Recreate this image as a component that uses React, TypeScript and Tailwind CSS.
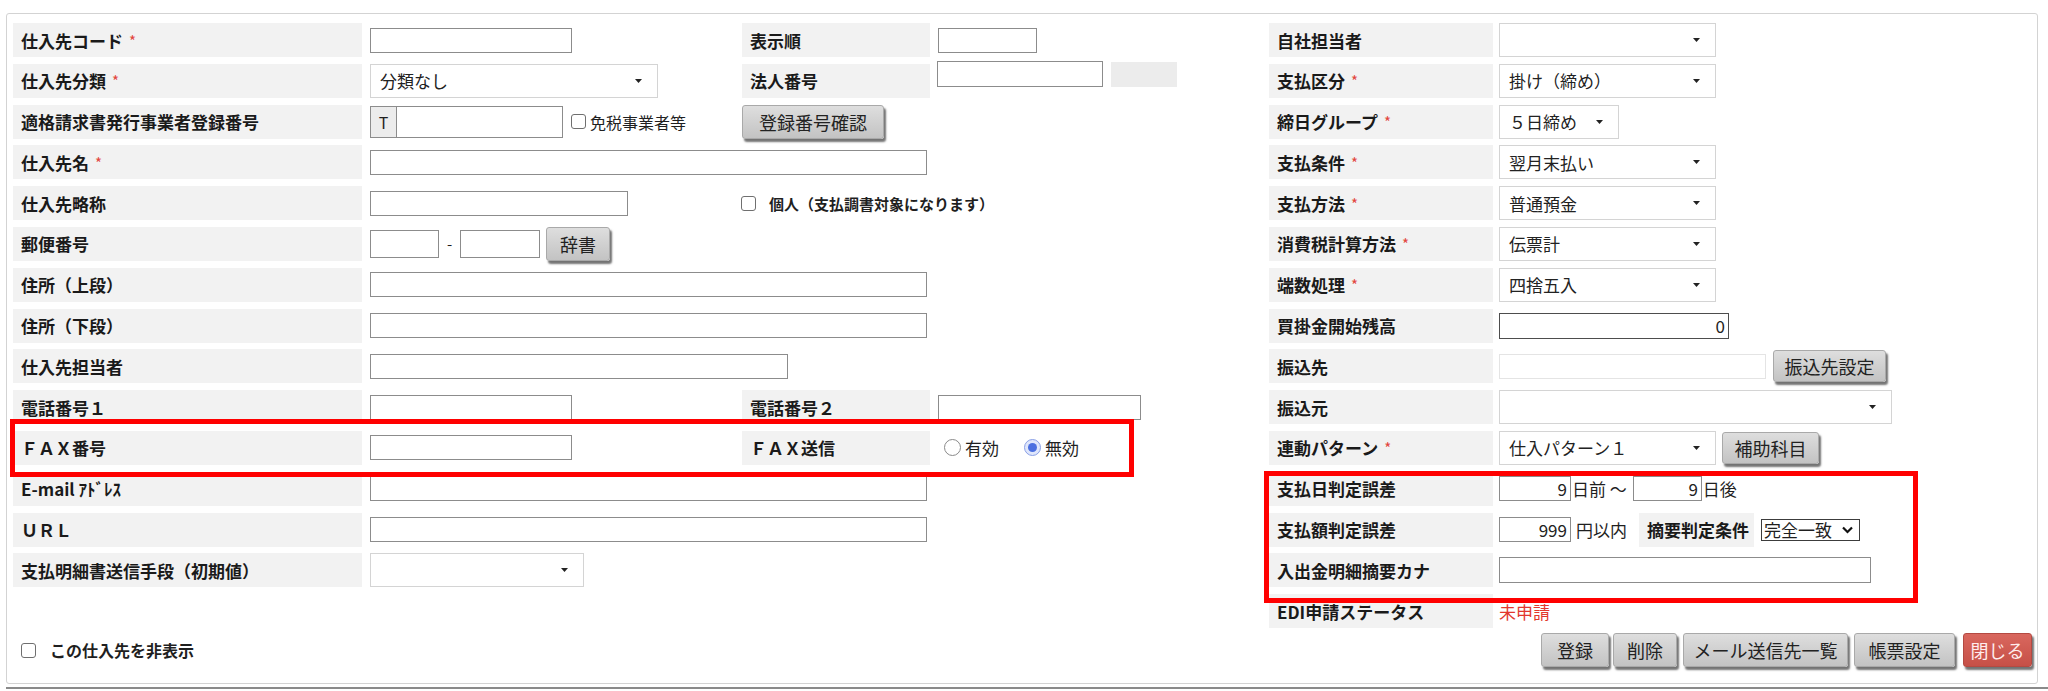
import type { ReactNode } from 'react';

// 仕入先マスタ登録フォーム

function Req() {
  return <span className="ml-[6px] text-[15px] font-normal text-[#e2453c]">*</span>;
}

function Label({ children, req, className = 'w-[349px]' }: { children: ReactNode; req?: boolean; className?: string }) {
  return (
    <div className={`flex h-[34px] shrink-0 items-center bg-[#f2f2f2] pl-[8px] text-[17px] font-bold leading-none text-[#1a1a1a] ${className}`}>
      {children}
      {req && <Req />}
    </div>
  );
}

function TextBox({ className, value, right, tone = 'normal' }: { className: string; value?: string; right?: boolean; tone?: 'normal' | 'dark' | 'light' }) {
  const border = tone === 'dark' ? 'border-[#4d4d4d]' : tone === 'light' ? 'border-[#e4e4e4]' : 'border-[#8c8c8c]';
  return (
    <div className={`flex shrink-0 items-center border bg-white px-[3px] text-[17px] leading-none text-[#222] ${border} ${right ? 'justify-end' : ''} ${className}`}>
      {value}
    </div>
  );
}

function Caret() {
  return (
    <svg width="7" height="4" viewBox="0 0 7 4" className="shrink-0">
      <path d="M0 0h7L3.5 4z" fill="#222" />
    </svg>
  );
}

function Dropdown({ className, value = '' }: { className: string; value?: string }) {
  return (
    <div className={`flex h-[34px] shrink-0 items-center justify-between border border-[#d4d4d4] bg-white pl-[9px] pr-[15px] text-[17px] leading-none text-[#222] ${className}`}>
      <span>{value}</span>
      <Caret />
    </div>
  );
}

function GreyButton({ children, className }: { children: ReactNode; className: string }) {
  return (
    <div className={`flex shrink-0 items-center justify-center rounded-[3px] border border-[#a9a9a9] bg-linear-to-b from-[#dedede] to-[#c3c3c3] text-[18px] leading-none text-[#222] shadow-[2px_3px_2px_rgba(0,0,0,0.55)] ${className}`}>
      {children}
    </div>
  );
}

function Checkbox() {
  return <span className="inline-block h-[15px] w-[15px] shrink-0 rounded-[3px] border border-[#6f6f6f] bg-white" />;
}

function Radio({ checked }: { checked?: boolean }) {
  return checked ? (
    <span className="flex h-[17px] w-[17px] shrink-0 items-center justify-center rounded-full border border-[#8aa0e6] bg-[#dfe6fb]">
      <span className="h-[9px] w-[9px] rounded-full bg-[#4b6fe0]" />
    </span>
  ) : (
    <span className="h-[17px] w-[17px] shrink-0 rounded-full border border-[#8a8a8a] bg-white" />
  );
}

function Row({ children }: { children: ReactNode }) {
  return <div className="flex h-[34px] items-center">{children}</div>;
}

// left side: label column + fields (the middle label column sits inside the same rows)
function Field({ children, className = '' }: { children?: ReactNode; className?: string }) {
  return <div className={`ml-[8px] flex h-full items-center ${className}`}>{children}</div>;
}

function MidLabel({ children }: { children: ReactNode }) {
  return <Label className="w-[188px]">{children}</Label>;
}

function LeftBlock() {
  return (
    <div className="flex w-[1256px] shrink-0 flex-col gap-[6.8px]">
      <Row>
        <Label req>仕入先コード</Label>
        <Field className="w-[372px]"><TextBox className="h-[25px] w-[202px]" /></Field>
        <MidLabel>表示順</MidLabel>
        <Field className="ml-[7px]"><TextBox className="h-[25px] w-[99px]" /></Field>
      </Row>
      <Row>
        <Label req>仕入先分類</Label>
        <Field className="w-[372px]"><Dropdown className="w-[288px]" value="分類なし" /></Field>
        <MidLabel>法人番号</MidLabel>
        <div className="ml-[7px] flex h-full items-start gap-[8px]">
          <TextBox className="-mt-[3px] h-[26px] w-[166px]" />
          <div className="-mt-[2px] h-[25px] w-[66px] bg-[#ececec]" />
        </div>
      </Row>
      <Row>
        <Label>適格請求書発行事業者登録番号</Label>
        <Field className="w-[372px]">
          <div className="flex h-[32px] w-[27px] items-center justify-center border border-[#8c8c8c] bg-[#ececec] text-[16px] leading-none">T</div>
          <TextBox className="h-[32px] w-[166px] border-l-0" />
          <span className="ml-[8px] flex items-center gap-[4px] text-[16px] leading-none">
            <Checkbox />
            免税事業者等
          </span>
        </Field>
        <GreyButton className="h-[34px] w-[142px]">登録番号確認</GreyButton>
      </Row>
      <Row>
        <Label req>仕入先名</Label>
        <Field><TextBox className="h-[25px] w-[557px]" /></Field>
      </Row>
      <Row>
        <Label>仕入先略称</Label>
        <Field className="w-[371px]"><TextBox className="h-[25px] w-[258px]" /></Field>
        <span className="flex items-center gap-[13px] text-[15px] font-bold leading-none">
          <Checkbox />
          個人（支払調書対象になります）
        </span>
      </Row>
      <Row>
        <Label>郵便番号</Label>
        <Field>
          <TextBox className="h-[28px] w-[69px]" />
          <span className="w-[21px] text-center text-[15px] leading-none">-</span>
          <TextBox className="h-[28px] w-[80px]" />
          <GreyButton className="ml-[6px] h-[34px] w-[64px]">辞書</GreyButton>
        </Field>
      </Row>
      <Row>
        <Label>住所（上段）</Label>
        <Field><TextBox className="h-[25px] w-[557px]" /></Field>
      </Row>
      <Row>
        <Label>住所（下段）</Label>
        <Field><TextBox className="h-[25px] w-[557px]" /></Field>
      </Row>
      <Row>
        <Label>仕入先担当者</Label>
        <Field><TextBox className="h-[25px] w-[418px]" /></Field>
      </Row>
      <Row>
        <Label>電話番号１</Label>
        <Field className="w-[372px]"><TextBox className="h-[25px] w-[202px]" /></Field>
        <MidLabel>電話番号２</MidLabel>
        <Field className="ml-[7px]"><TextBox className="h-[25px] w-[203px]" /></Field>
      </Row>
      <Row>
        <Label>ＦＡＸ番号</Label>
        <Field className="w-[372px]"><TextBox className="h-[25px] w-[202px]" /></Field>
        <MidLabel>ＦＡＸ送信</MidLabel>
        <div className="ml-[14px] flex items-center text-[17px] leading-none">
          <Radio />
          <span className="ml-[4px]">有効</span>
          <span className="ml-[25px]"><Radio checked /></span>
          <span className="ml-[4px]">無効</span>
        </div>
      </Row>
      <Row>
        <Label>E-mail ｱﾄﾞﾚｽ</Label>
        <Field><TextBox className="h-[25px] w-[557px]" /></Field>
      </Row>
      <Row>
        <Label>ＵＲＬ</Label>
        <Field><TextBox className="h-[25px] w-[557px]" /></Field>
      </Row>
      <Row>
        <Label>支払明細書送信手段（初期値）</Label>
        <Field><Dropdown className="w-[214px]" /></Field>
      </Row>
    </div>
  );
}

const selects = [
  { label: '自社担当者', req: false, value: '', w: 'w-[217px]' },
  { label: '支払区分', req: true, value: '掛け（締め）', w: 'w-[217px]' },
  { label: '締日グループ', req: true, value: '５日締め', w: 'w-[120px]' },
  { label: '支払条件', req: true, value: '翌月末払い', w: 'w-[217px]' },
  { label: '支払方法', req: true, value: '普通預金', w: 'w-[217px]' },
  { label: '消費税計算方法', req: true, value: '伝票計', w: 'w-[217px]' },
  { label: '端数処理', req: true, value: '四捨五入', w: 'w-[217px]' },
];

function RLabel({ children, req }: { children: ReactNode; req?: boolean }) {
  return (
    <Label req={req} className="w-[224px]">
      {children}
    </Label>
  );
}

function RightBlock() {
  return (
    <div className="flex w-[763px] shrink-0 flex-col gap-[6.8px]">
      {selects.map((s) => (
        <Row key={s.label}>
          <RLabel req={s.req}>{s.label}</RLabel>
          <Dropdown className={`ml-[6px] ${s.w}`} value={s.value} />
        </Row>
      ))}
      <Row>
        <RLabel>買掛金開始残高</RLabel>
        <TextBox className="ml-[6px] h-[26px] w-[230px]" tone="dark" value="0" right />
      </Row>
      <Row>
        <RLabel>振込先</RLabel>
        <TextBox className="ml-[6px] h-[25px] w-[267px]" tone="light" />
        <GreyButton className="ml-[7px] h-[32px] w-[113px]">振込先設定</GreyButton>
      </Row>
      <Row>
        <RLabel>振込元</RLabel>
        <Dropdown className="ml-[6px] w-[393px]" />
      </Row>
      <Row>
        <RLabel req>連動パターン</RLabel>
        <Dropdown className="ml-[6px] w-[217px]" value="仕入パターン１" />
        <GreyButton className="ml-[6px] h-[32px] w-[97px]">補助科目</GreyButton>
      </Row>
      <Row>
        <RLabel>支払日判定誤差</RLabel>
        <TextBox className="ml-[6px] h-[25px] w-[72px]" value="9" right />
        <span className="ml-[1px] text-[17px] leading-none">日前 ～</span>
        <TextBox className="ml-[6px] h-[25px] w-[69px]" value="9" right />
        <span className="ml-[1px] text-[17px] leading-none">日後</span>
      </Row>
      <Row>
        <RLabel>支払額判定誤差</RLabel>
        <TextBox className="ml-[6px] h-[25px] w-[72px]" value="999" right />
        <span className="ml-[5px] text-[17px] leading-none">円以内</span>
        <Label className="ml-[12px] w-[115px]">摘要判定条件</Label>
        <div className="ml-[7px] flex h-[22px] w-[99px] items-center justify-between border border-[#3c3c3c] bg-white pl-[2px] pr-[6px] text-[17px] leading-none">
          完全一致
          <svg width="11" height="8" viewBox="0 0 11 8">
            <path d="M1 1.5l4.5 4.5L10 1.5" fill="none" stroke="#111" strokeWidth="2.2" />
          </svg>
        </div>
      </Row>
      <Row>
        <RLabel>入出金明細摘要カナ</RLabel>
        <TextBox className="ml-[6px] h-[26px] w-[372px]" />
      </Row>
      <Row>
        <RLabel>EDI申請ステータス</RLabel>
        <span className="ml-[6px] text-[17px] leading-none text-[#e2372d]">未申請</span>
      </Row>
    </div>
  );
}

export default function App() {
  return (
    <div className="relative h-[691px] w-[2048px] overflow-hidden bg-white pl-[6px] pt-[13px] font-['Noto_Sans_CJK_JP','Noto_Sans',sans-serif] text-[#1f1f1f]">
      <div className="w-[2032px] rounded-[3px] border border-[#d3d3d3] bg-white pb-[16px] pl-[6px] pr-[5px] pt-[9px]">
        <div className="flex">
          <LeftBlock />
          <RightBlock />
        </div>
        <div className="mt-[5px] flex items-center justify-between">
          <div className="ml-[8px] flex items-center gap-[14px] text-[16px] font-bold leading-none">
            <Checkbox />
            この仕入先を非表示
          </div>
          <div className="flex h-[34px]">
            <GreyButton className="h-[34px] w-[68px]">登録</GreyButton>
            <GreyButton className="ml-[4px] h-[34px] w-[64px]">削除</GreyButton>
            <GreyButton className="ml-[6px] h-[34px] w-[165px]">メール送信先一覧</GreyButton>
            <GreyButton className="ml-[6px] h-[34px] w-[101px]">帳票設定</GreyButton>
            <div className="ml-[8px] flex h-[34px] w-[69px] items-center justify-center rounded-[3px] border border-[#b44a42] bg-linear-to-b from-[#d9675e] to-[#c65047] text-[18px] leading-none text-[#ffecec] shadow-[2px_3px_2px_rgba(0,0,0,0.55)]">
              閉じる
            </div>
          </div>
        </div>
      </div>
      <div className="mt-[3px] h-[2px] w-full bg-[#8a8a8a]" />

      {/* 確認用の赤枠 */}
      <div className="absolute left-[10px] top-[419px] h-[58px] w-[1124px] border-[5px] border-[#ff0000]" />
      <div className="absolute left-[1264px] top-[471px] h-[132px] w-[654px] border-[5px] border-[#ff0000]" />
    </div>
  );
}
